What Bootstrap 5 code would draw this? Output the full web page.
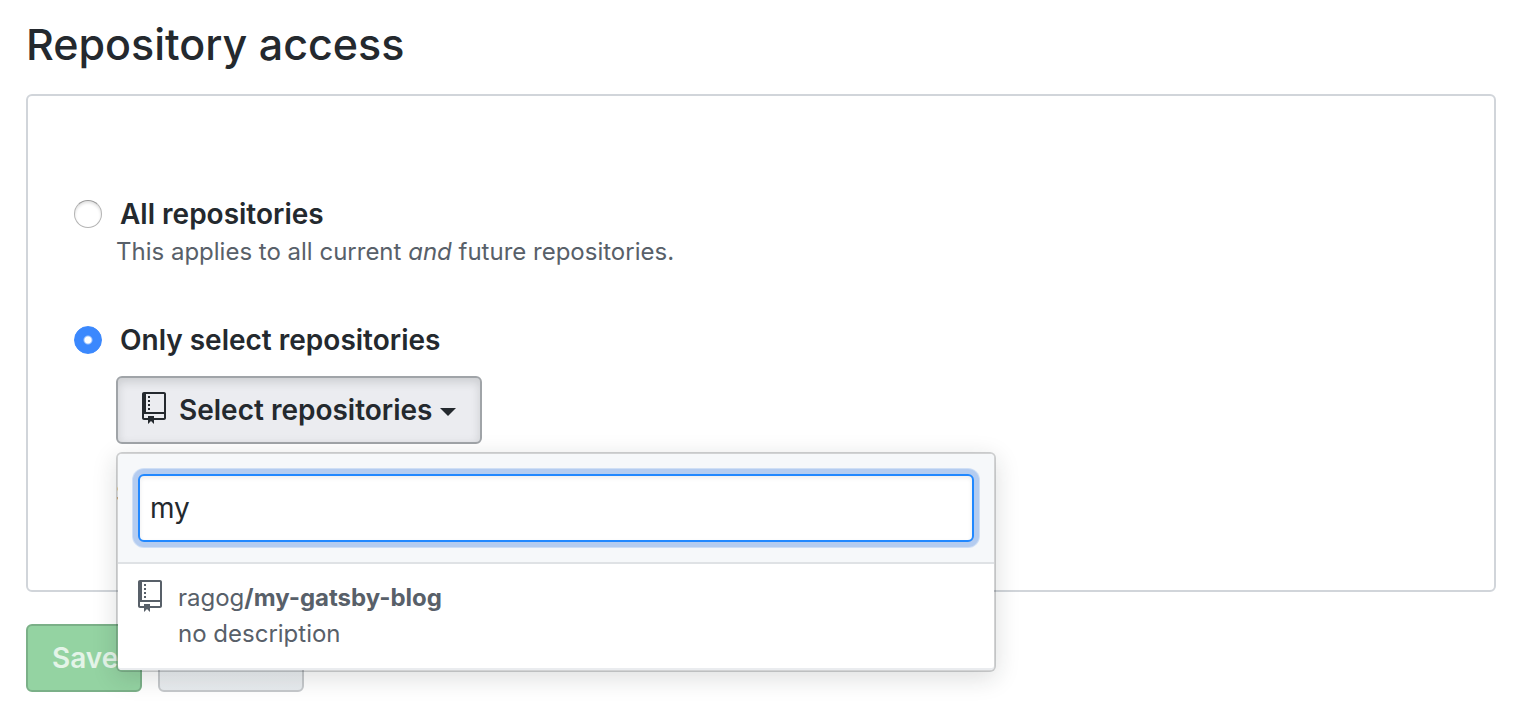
<!DOCTYPE html>
<html lang="en">
<head>
<meta charset="utf-8">
<meta name="viewport" content="width=device-width, initial-scale=1">
<title>Repository access</title>
<link href="https://cdn.jsdelivr.net/npm/bootstrap@5.3.0/dist/css/bootstrap.min.css" rel="stylesheet">
<style>
  body { font-family: Inter, "Liberation Sans", sans-serif; font-size: 24px; line-height: 36px; color: #24292e; background: #fff; }
  .page { padding: 20px 32px 28px 26px; }
  .page-title { font-size: 43px; line-height: 48px; font-weight: 500; margin-bottom: 26px; }
  .access-box { border: 2px solid #d1d5da; border-radius: 6px; padding: 97px 46px 78px; }
  .option { gap: 18px; }
  .option + .hint + .option { margin-top: 50px; }
  .option .form-check-input { width: 28px; height: 28px; border: 1px solid #b4b4b4; border-top-color: #999; box-shadow: inset 0 2px 3px rgba(0,0,0,.12); }
  .option .form-check-input:checked { background: radial-gradient(circle, #fff 3px, #3b88fd 5px); border-color: #3b88fd; box-shadow: none; }
  .option label { font-size: 28px; line-height: 42px; font-weight: 600; }
  .option-body { padding-left: 42px; }
  .picker { padding-top: 15px; }
  .hint { color: #586069; line-height: 34px; }
  .select-btn, .action-btn { font-size: 28px; line-height: 40px; font-weight: 600; padding: 12px 24px; border: 2px solid; border-radius: 6px; }
  .select-btn, .select-btn:hover { color: #24292e; background: #ebecf0; border-color: #a0a4a8; box-shadow: inset 0 4px 10px rgba(27,31,35,.15); }
  .select-btn svg { margin-right: 13px; margin-top: -4px; }
  .select-btn::after { margin-left: 7px; margin-top: 4px; border-top: 8px solid; border-left: 8px solid transparent; border-right: 8px solid transparent; }
  .repo-menu { top: 100%; left: 0; width: 880px; margin-top: 8px; border: 2px solid rgba(27,31,35,.2); border-radius: 6px; background: #fff; background-clip: padding-box; box-shadow: 0 6px 24px rgba(27,31,35,.15); z-index: 10; max-width: calc(100vw - 160px); }
  .menu-search { background: #f6f8fa; border-bottom: 2px solid #dfe2e5; border-radius: 4px 4px 0 0; padding: 20px; }
  .menu-search .form-control { height: 68px; padding: 0 10px; font-size: 28px; color: #24292e; border: 2px solid #2188ff; border-radius: 6px; box-shadow: inset 0 2px 4px rgba(27,31,35,.08), 0 0 0 5px #b4ccf0, 0 0 0 6px #cfdff5; }
  .repo-item { color: #586069; padding: 16px 20px; gap: 16px; border-bottom: 2px solid #eaecef; border-radius: 0 0 4px 4px; }
  .picked { margin-top: 32px; color: #586069; }
  .actions { gap: 16px; margin-top: 32px; }
  .action-btn.save, .action-btn.save:disabled { color: #e4f4e8; background: #94d3a2; border-color: #7bb088; opacity: 1; padding-right: 22px; }
  .action-btn.cancel { background: linear-gradient(#fafbfc, #e8ecef); border-color: #c6c9cc; color: #24292e; width: 146px; }
</style>
</head>
<body>
<main class="page">
  <h1 class="page-title">Repository access</h1>
  <form>
    <div class="access-box">
      <div class="option d-flex align-items-center">
        <input class="form-check-input m-0" type="radio" name="access" id="all">
        <label for="all">All repositories</label>
      </div>
      <p class="option-body hint mb-0">This applies to all current <em>and</em> future repositories.</p>
      <div class="option d-flex align-items-center">
        <input class="form-check-input m-0" type="radio" name="access" id="some" checked>
        <label for="some">Only select repositories</label>
      </div>
      <div class="option-body picker">
        <div class="position-relative">
          <button type="button" class="btn select-btn dropdown-toggle d-inline-flex align-items-center" aria-expanded="true">
            <svg width="24" height="32" viewBox="0 0 12 16" fill="currentColor" aria-hidden="true"><path fill-rule="evenodd" d="M4 9H3V8h1v1zm0-3H3v1h1V6zm0-2H3v1h1V4zm0-2H3v1h1V2zm8-1v12c0 .55-.45 1-1 1H6v2l-1.5-1.5L3 16v-2H1c-.55 0-1-.45-1-1V1c0-.55.45-1 1-1h10c.55 0 1 .45 1 1zm-1 10H1v2h2v-1h3v1h5v-2zm0-10H2v9h9V1z"/></svg>
            Select repositories
          </button>
          <div class="repo-menu position-absolute">
            <div class="menu-search">
              <input type="text" class="form-control" value="my" aria-label="Search for a repository">
            </div>
            <a href="#" class="repo-item d-flex align-items-start text-decoration-none">
              <svg width="24" height="32" viewBox="0 0 12 16" fill="currentColor" aria-hidden="true"><path fill-rule="evenodd" d="M4 9H3V8h1v1zm0-3H3v1h1V6zm0-2H3v1h1V4zm0-2H3v1h1V2zm8-1v12c0 .55-.45 1-1 1H6v2l-1.5-1.5L3 16v-2H1c-.55 0-1-.45-1-1V1c0-.55.45-1 1-1h10c.55 0 1 .45 1 1zm-1 10H1v2h2v-1h3v1h5v-2zm0-10H2v9h9V1z"/></svg>
              <span>ragog<strong class="fw-bold">/my-gatsby-blog</strong><br>no description</span>
            </a>
          </div>
        </div>
        <p class="picked mb-0">Selected 0 repositories.</p>
      </div>
    </div>
    <div class="actions d-flex">
      <button type="submit" class="btn action-btn save" disabled>Save</button>
      <button type="button" class="btn action-btn cancel" aria-label="Cancel"></button>
    </div>
  </form>
</main>
<script src="https://cdn.jsdelivr.net/npm/bootstrap@5.3.0/dist/js/bootstrap.bundle.min.js"></script>
</body>
</html>
